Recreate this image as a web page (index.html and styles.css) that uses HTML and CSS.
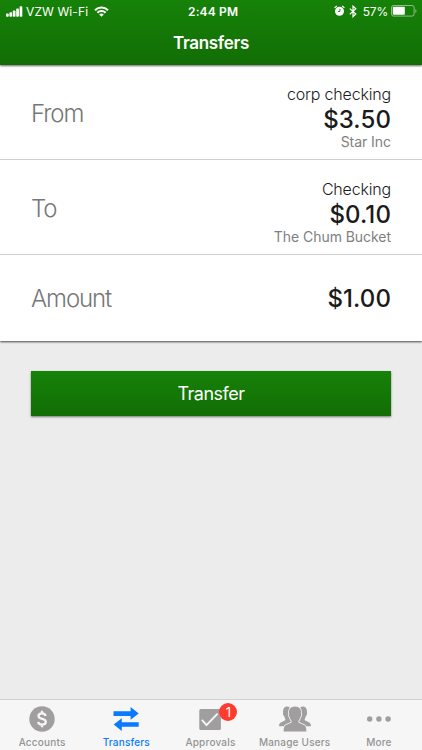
FILE: index.html
```
<!DOCTYPE html>
<html lang="en">

<head>
    <meta charset="UTF-8">
    <meta name="viewport" content="width=device-width, initial-scale=1.0">
    <title>Transfers</title>
    <link rel="stylesheet" href="styles.css">
</head>

<body>
    <div class="app">
        <header class="header">
            <div class="status-bar">
                <div class="status-left">
                    <svg class="signal" width="17" height="11" viewBox="0 0 17 11" fill="#fff">
                        <rect x="0" y="7.5" width="2.7" height="3.2" rx="0.8"/>
                        <rect x="3.4" y="6.2" width="2.7" height="4.5" rx="0.8"/>
                        <rect x="6.8" y="4.5" width="2.7" height="6.2" rx="0.8"/>
                        <rect x="10.2" y="2.5" width="2.7" height="8.2" rx="0.8"/>
                        <rect x="13.6" y="0.3" width="2.7" height="10.4" rx="0.8"/>
                    </svg>
                    <span class="carrier">VZW Wi-Fi</span>
                    <svg class="wifi" width="15" height="11" viewBox="0 0 15 11" fill="none" stroke="#fff" stroke-width="2">
                        <path d="M1 4.2a9.2 9.2 0 0 1 13 0"/>
                        <path d="M3.4 6.8a5.8 5.8 0 0 1 8.2 0"/>
                        <path d="M7.5 10.8L5.2 8.5a3.3 3.3 0 0 1 4.6 0z" fill="#fff" stroke="none"/>
                    </svg>
                </div>
                <span class="time">2:44 PM</span>
                <div class="status-right">
                    <svg class="alarm" width="11" height="12" viewBox="0 0 11 12">
                        <circle cx="5.5" cy="6.2" r="4.5" fill="#fff"/>
                        <path d="M0.6 3a8 8 0 0 1 2.3-2M10.4 3a8 8 0 0 0-2.3-2" stroke="#fff" stroke-width="1.2" fill="none"/>
                        <path d="M5.9 3.8v2.7H3.9" stroke="#188008" stroke-width="0.9" fill="none"/>
                    </svg>
                    <svg class="bluetooth" width="8" height="13" viewBox="0 0 8 13" fill="none" stroke="#fff" stroke-width="1.2">
                        <path d="M0.8 3.6l6 5.4L4 11.7V1.1l2.8 2.7-6 5.4"/>
                    </svg>
                    <span class="percent">57%</span>
                    <svg class="battery" width="26" height="12" viewBox="0 0 26 12">
                        <rect x="0.5" y="0.5" width="22.6" height="10.6" rx="2" fill="none" stroke="#fff" stroke-opacity="0.5"/>
                        <rect x="1.8" y="1.8" width="12" height="8" rx="0.7" fill="#fff"/>
                        <path d="M24.4 4v4c1.4-.6 1.4-3.4 0-4z" fill="#fff" fill-opacity="0.5"/>
                    </svg>
                </div>
            </div>
            <h1>Transfers</h1>
        </header>

        <main class="content">
            <div class="form">
                <div class="row">
                    <span class="label">From</span>
                    <div class="value">
                        <div class="account">corp checking</div>
                        <div class="money">$3.50</div>
                        <div class="owner">Star Inc</div>
                    </div>
                </div>
                <div class="row">
                    <span class="label">To</span>
                    <div class="value">
                        <div class="account">Checking</div>
                        <div class="money">$0.10</div>
                        <div class="owner">The Chum Bucket</div>
                    </div>
                </div>
                <div class="row row-amount">
                    <span class="label">Amount</span>
                    <div class="value">
                        <div class="money">$1.00</div>
                    </div>
                </div>
            </div>
            <button class="transfer-btn">Transfer</button>
        </main>

        <nav class="tabs">
            <a class="tab">
                <svg width="26" height="26" viewBox="0 0 26 26">
                    <circle cx="13" cy="13" r="12.7" fill="#a09e9e"/>
                    <path d="M16.6 10c-.3-1.7-1.6-2.6-3.6-2.6-2.1 0-3.5 1-3.5 2.7 0 3.8 7.3 1.9 7.3 5.7 0 1.8-1.5 2.8-3.7 2.8-2.3 0-3.7-1-3.9-2.8M13 4.8v3M13 18v3.2" fill="none" stroke="#f6f6f6" stroke-width="2.3"/>
                </svg>
                <span>Accounts</span>
            </a>
            <a class="tab active">
                <svg width="26" height="26" viewBox="0 0 26 26" fill="#0a7aff">
                    <path d="M0.5 5.2H17.6V1L25.7 7.4 17.6 13.8V9.9H0.5z"/>
                    <path d="M25.7 16.2H8.8V12.3L0.7 18.6 8.8 25V20.8H25.7z"/>
                </svg>
                <span>Transfers</span>
            </a>
            <a class="tab">
                <svg width="26" height="26" viewBox="0 0 26 26">
                    <rect x="2.3" y="3" width="21.6" height="21" rx="1.5" fill="#a09e9e"/>
                    <path d="M4.9 13.8l4.6 5.3L20.6 7.6" fill="none" stroke="#f6f6f6" stroke-width="2"/>
                </svg>
                <span>Approvals</span>
                <b class="badge">1</b>
            </a>
            <a class="tab">
                <svg width="32" height="26" viewBox="0 0 32 26" fill="#a09e9e">
                    <path d="M10.5 1C6.5-.8 3.4 2 4.1 6.8c-.4 1.4.1 2.5 1 3 .2 1.4.6 2.2 1.2 2.9v1.6L1.8 16.4C.6 17 0 18.4 0 20.2h7l5-4z"/>
                    <path d="M21.5 1c4-1.8 7.1 1 6.4 5.8.4 1.4-.1 2.5-1 3-.2 1.4-.6 2.2-1.2 2.9v1.6l4.5 2.1c1.2.6 1.8 2 1.8 3.8h-7l-5-4z"/>
                    <path d="M16 .5c4.5 0 6.6 3 5.9 7 .8.8.4 3.1-.7 3.6-.3 1.8-.9 2.9-1.8 3.8v1.6l5.6 2.4c1.8.9 2.4 2.7 2.4 6.5H4.6c0-3.8.6-5.6 2.4-6.5l5.6-2.4v-1.6c-.9-.9-1.5-2-1.8-3.8-1.1-.5-1.5-2.8-.7-3.6-.7-4 1.4-7 5.9-7z" stroke="#f6f6f6" stroke-width="1.6" paint-order="stroke"/>
                </svg>
                <span>Manage Users</span>
            </a>
            <a class="tab">
                <svg width="26" height="26" viewBox="0 0 26 26" fill="#a09e9e">
                    <circle cx="3.7" cy="13" r="2.7"/>
                    <circle cx="12.9" cy="13" r="2.7"/>
                    <circle cx="22.1" cy="13" r="2.7"/>
                </svg>
                <span>More</span>
            </a>
        </nav>
    </div>
</body>

</html>
```
FILE: styles.css
```
* {
    box-sizing: border-box;
}

body {
    margin: 0;
    font-family: Inter, "Liberation Sans", sans-serif;
    background-color: #ececec;
}

.app {
    height: 750px;
    display: flex;
    flex-direction: column;
}

.header {
    height: 65px;
    color: white;
    background: linear-gradient(#168208, #126d05);
    box-shadow: 0 1px 2px rgba(0, 0, 0, 0.6);
    z-index: 1;
}

.status-bar {
    height: 22px;
    padding: 0 5px 0 6px;
    display: grid;
    grid-template-columns: 182px auto 1fr;
    align-items: center;
    font-size: 12px;
}

.status-left,
.status-right {
    display: flex;
    align-items: center;
}

.status-right {
    justify-content: flex-end;
}

.carrier {
    margin: 0 6px 0 3px;
    letter-spacing: 0.1px;
}

.time {
    font-weight: 600;
    letter-spacing: 0.15px;
}

.bluetooth {
    margin: 0 6px 0 4px;
}

.percent {
    margin-right: 3px;
    letter-spacing: -0.2px;
}

h1 {
    margin: 9px 0 0;
    font-size: 17px;
    line-height: 24px;
    font-weight: 600;
    letter-spacing: -0.3px;
    text-align: center;
}

.content {
    flex: 1;
}

.form {
    background-color: white;
    box-shadow: 0 1px 2px rgba(0, 0, 0, 0.7);
}

.row {
    height: 95px;
    padding: 2px 31px 0;
    display: flex;
    align-items: center;
    justify-content: space-between;
    border-bottom: 1px solid #cfcfcf;
}

.row-amount {
    height: 86px;
    padding-top: 0;
    border-bottom: none;
}

.label {
    font-size: 24px;
    font-weight: 300;
    letter-spacing: -1.1px;
    color: #777;
}

.value {
    text-align: right;
    color: #1b1b1b;
}

.account {
    padding-top: 7px;
    font-size: 16px;
    line-height: 23px;
    font-weight: 300;
    letter-spacing: -0.18px;
}

.money {
    font-size: 24px;
    line-height: 27px;
    font-weight: 500;
    letter-spacing: 0.1px;
}

.owner {
    font-size: 14px;
    line-height: 18px;
    letter-spacing: -0.05px;
    color: #808080;
}

.transfer-btn {
    display: block;
    width: 360px;
    height: 45px;
    margin: 30px 31px 0;
    padding: 0;
    border: none;
    color: white;
    font-family: inherit;
    font-size: 18px;
    letter-spacing: -0.5px;
    background: linear-gradient(#168208, #126d05);
    box-shadow: 0 1px 2px rgba(0, 0, 0, 0.5);
}

.tabs {
    height: 51px;
    padding-right: 1px;
    display: grid;
    grid-template-columns: repeat(5, 1fr);
    background-color: #f6f6f6;
    border-top: 1px solid #d0d0d0;
}

.tab {
    position: relative;
    display: flex;
    flex-direction: column;
    align-items: center;
    padding-top: 6px;
    color: #949494;
    font-size: 10px;
    line-height: 14px;
    font-weight: 500;
    letter-spacing: 0.2px;
    white-space: nowrap;
}

.tab span {
    margin-top: 3px;
}

.active {
    color: #0a7aff;
}

.badge {
    position: absolute;
    top: 3px;
    left: 51px;
    width: 18px;
    height: 18px;
    border-radius: 50%;
    background-color: #ff3b30;
    color: white;
    font-size: 13px;
    font-weight: 400;
    line-height: 18px;
    letter-spacing: 0;
    text-align: center;
}
```
